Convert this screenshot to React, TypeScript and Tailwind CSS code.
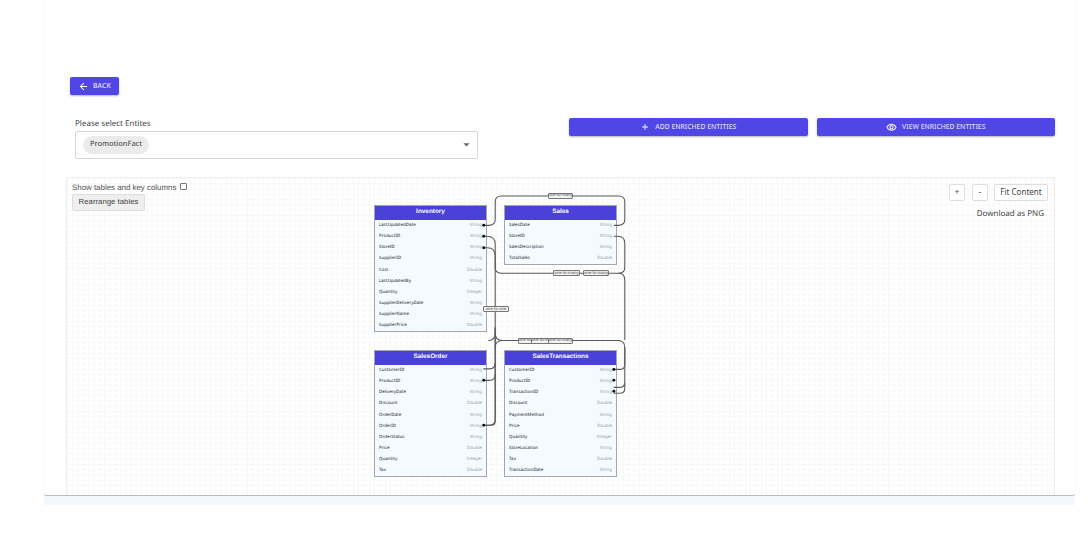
import { MdAdd, MdArrowBack, MdArrowDropDown, MdOutlineVisibility } from 'react-icons/md';

type Column = [string, string];

const inventory: Column[] = [
  ['LastUpdatedDate', 'String'],
  ['ProductID', 'String'],
  ['StoreID', 'String'],
  ['SupplierID', 'String'],
  ['Cost', 'Double'],
  ['LastUpdatedBy', 'String'],
  ['Quantity', 'Integer'],
  ['SupplierDeliveryDate', 'String'],
  ['SupplierName', 'String'],
  ['SupplierPrice', 'Double'],
];

const sales: Column[] = [
  ['SalesDate', 'String'],
  ['StoreID', 'String'],
  ['SalesDescription', 'String'],
  ['TotalSales', 'Double'],
];

const salesOrder: Column[] = [
  ['CustomerID', 'String'],
  ['ProductID', 'String'],
  ['DeliveryDate', 'String'],
  ['Discount', 'Double'],
  ['OrderDate', 'String'],
  ['OrderID', 'String'],
  ['OrderStatus', 'String'],
  ['Price', 'Double'],
  ['Quantity', 'Integer'],
  ['Tax', 'Double'],
];

const salesTransactions: Column[] = [
  ['CustomerID', 'String'],
  ['ProductID', 'String'],
  ['TransactionID', 'String'],
  ['Discount', 'Double'],
  ['PaymentMethod', 'String'],
  ['Price', 'Double'],
  ['Quantity', 'Integer'],
  ['StoreLocation', 'String'],
  ['Tax', 'Double'],
  ['TransactionDate', 'String'],
];

// canvas origin is (67, 178) so everything below is canvas-relative
const edges = [
  'M417 47.5 h6 q6 0 6 -6 v-17.5 q0 -6 6 -6 h118 q6 0 6 6 v17.5 q0 6 -6 6 h-5',
  'M417 58.5 h4 q8 0 8 8 v23 q0 6 6 6 h118 q6 0 6 -6 v-24 q0 -7 -7 -7 h-4',
  'M417 70 h4 q8 0 8 8 v166 q0 4 -4 4 h-8',
  'M417 191.5 h6 q6 0 6 -6',
  'M417 203 h6 q6 0 6 -6',
  'M417 248 h6 q6 0 6 -6 v-92',
  'M429 156 q0 7 7 7 h116 q7 0 7 7 v17 q0 5 -5 5 h-7',
  'M553 95.5 q6 0 6 7 v60 M559 170 v35 q0 5 -5 5 h-6 M559 190 v21 q0 5 -5 5 h-6',
  'M429 150 v6 q0 7 -7 7 M429 170 q0 -7 7 -7',
];

const dots: [number, number][] = [
  [417.5, 47.5],
  [417.5, 58.5],
  [417.5, 70],
  [417.5, 203],
  [417.5, 248],
  [548, 192],
  [548, 203],
  [548, 214],
];

const labels: [number, number, number, string][] = [
  [481, 15, 25, 'one-to-many'],
  [486, 92.5, 27, 'one-to-many'],
  [516, 92.5, 26, 'one-to-many'],
  [416, 128.5, 26, 'one-to-one'],
  [451, 160, 25, 'one-to-many'],
  [464, 160, 25, 'one-to-many'],
  [481, 160, 25, 'one-to-many'],
];

function EntityTable({ name, columns, left, top }: { name: string; columns: Column[]; left: string; top: string }) {
  return (
    <div className={`absolute w-[113px] border border-[#a3a7ad] bg-[#f5fafe] ${left} ${top}`}>
      <div className="flex h-[14px] items-center justify-center bg-[#4a41d8] pb-px font-['Liberation_Sans',sans-serif] text-[6.4px] font-bold text-white">
        {name}
      </div>
      {columns.map(([col, type]) => (
        <div key={col} className="flex h-[11.2px] items-center justify-between px-[4px] text-[4.4px]">
          <span className="font-medium text-[#3f4650]">{col}</span>
          <span className="text-[#9a9ea4]">{type}</span>
        </div>
      ))}
    </div>
  );
}

export default function App() {
  return (
    <div className="h-[543px] w-full overflow-hidden bg-white font-['Noto_Sans',sans-serif] [text-rendering:geometricPrecision]">
      <div className="ml-[44px] w-[1031px] rounded-b-[3px] border-b border-[#b9bcbf] pt-[77px] shadow-[0_1px_1px_rgba(0,0,0,0.15)]">
        <button className="ml-[26px] flex h-[18px] w-[49px] items-center justify-center gap-[4px] rounded-[2px] bg-[#4f46e5] text-[6.8px] font-medium tracking-[0.2px] text-[#e5e3ff] shadow-[0_1px_2px_rgba(0,0,0,0.3)]">
          <MdArrowBack className="text-[11px] text-white" />
          BACK
        </button>

        <div className="mt-[23px] flex pl-[31px] pr-[20px]">
          <div className="w-[403px]">
            <div className="mb-[1.5px] flex h-[11px] items-center pt-px text-[8px] text-[#3c4148]">Please select Entites</div>
            <div className="flex h-[28px] items-center justify-between rounded-[2px] border border-[#d3d6da] pl-[7px] pr-[3px]">
              <span className="flex h-[18px] items-center rounded-full bg-[#ebebeb] px-[7px] text-[7.4px] font-medium text-[#555]">
                PromotionFact
              </span>
              <MdArrowDropDown className="text-[15px] text-[#6b6b6b]" />
            </div>
          </div>
          <div className="ml-[91px] flex h-[18px] flex-1 gap-[9px]">
            <button className="flex h-[18px] flex-1 items-center justify-center gap-[5px] rounded-[2px] bg-[#4f46e5] text-[6.8px] font-medium text-[#dedcff] shadow-[0_1px_2px_rgba(0,0,0,0.3)]">
              <MdAdd className="text-[10px] text-white" />
              ADD ENRICHED ENTITIES
            </button>
            <button className="flex h-[18px] flex-1 items-center justify-center gap-[5px] rounded-[2px] bg-[#4f46e5] text-[6.8px] font-medium text-[#dedcff] shadow-[0_1px_2px_rgba(0,0,0,0.3)]">
              <MdOutlineVisibility className="text-[11px] text-white" />
              VIEW ENRICHED ENTITIES
            </button>
          </div>
        </div>

        <div className="relative ml-[22px] mt-[18px] h-[318px] w-[989px] rounded-t-[2px] border border-b-0 border-[#eeeeee] bg-[linear-gradient(#f7f7f7_1px,transparent_1px),linear-gradient(90deg,#f7f7f7_1px,transparent_1px)] bg-[size:5.3px_5.3px]">
          <div className="flex justify-between pl-[5px] pr-[6px] pt-[5px] font-['Liberation_Sans',sans-serif]">
            <div>
              <label className="flex h-[10px] items-center gap-[4px] text-[7.9px] text-[#555]">
                Show tables and key columns
                <span className="mb-[2px] size-[7px] rounded-[1px] border border-[#767676] bg-white" />
              </label>
              <button className="mt-[1px] block h-[17px] w-[73px] rounded-[2px] border border-[#dedede] bg-[#efefef] text-[7.8px] text-[#444]">
                Rearrange tables
              </button>
            </div>
            <div className="flex flex-col items-end pt-px">
              <div className="flex gap-[7px] font-['Noto_Sans',sans-serif]">
                <button className="h-[17px] w-[16px] rounded-[2px] border border-[#dedede] bg-white text-[8px] text-[#444]">+</button>
                <button className="h-[17px] w-[16px] rounded-[2px] border border-[#dedede] bg-white text-[8px] text-[#444]">-</button>
                <button className="-ml-px h-[17px] w-[54px] rounded-[2px] border border-[#dedede] bg-white text-[8px] text-[#444]">Fit Content</button>
              </div>
              <div className="mr-[4px] mt-[7px] font-['Noto_Sans',sans-serif] text-[8px] text-[#444]">Download as PNG</div>
            </div>
          </div>

          <EntityTable name="Inventory" columns={inventory} left="left-[307px]" top="top-[27px]" />
          <EntityTable name="Sales" columns={sales} left="left-[437px]" top="top-[27px]" />
          <EntityTable name="SalesOrder" columns={salesOrder} left="left-[307px]" top="top-[172px]" />
          <EntityTable name="SalesTransactions" columns={salesTransactions} left="left-[437px]" top="top-[172px]" />

          <svg className="absolute left-0 top-0 size-full" viewBox="0 0 989 318" fill="none">
            {edges.map((d) => (
              <path key={d} d={d} stroke="#5a5a5a" strokeWidth="1.1" />
            ))}
            {dots.map(([x, y]) => (
              <circle key={`${x}-${y}`} cx={x} cy={y} r="1.5" fill="#111" />
            ))}
          </svg>

          {labels.map(([x, y, w, text]) => (
            <span
              key={`${x}-${y}`}
              className="absolute flex h-[6px] items-center justify-center overflow-hidden whitespace-nowrap rounded-[1px] border-[0.5px] border-[#777] bg-[#f2f2f2] text-[4px] leading-[5px] text-[#444]"
              style={{ left: x, top: y, width: w }}
            >
              {text}
            </span>
          ))}
        </div>
      </div>
      <div className="ml-[44px] h-[9px] w-[1031px] bg-[#f3f8fc]" />
    </div>
  );
}
